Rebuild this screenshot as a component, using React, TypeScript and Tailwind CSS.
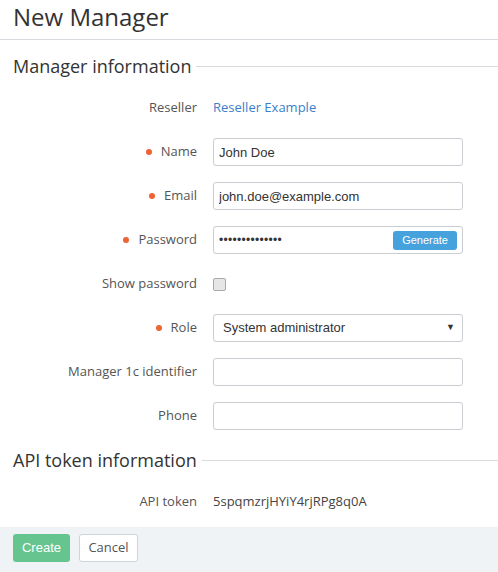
const label = "font-['Open_Sans',sans-serif] text-[13px] text-[#555]";
const input =
  "h-[28px] w-[250px] rounded-[3px] border border-[#c9ccd1] bg-white px-[5px] font-['Liberation_Sans',Arial,sans-serif] text-[13px] text-[#333] outline-none";

function Row({ name, required, children }: { name: string; required?: boolean; children: React.ReactNode }) {
  return (
    <div className="flex h-[28px] items-center">
      <div className={`flex w-[197px] items-center justify-end ${label}`}>
        {required && <span className="mr-[9px] inline-block h-[6px] w-[6px] rounded-full bg-[#ef6234]" />}
        {name}
      </div>
      <div className="ml-[16px] flex items-center">{children}</div>
    </div>
  );
}

function Section({ title }: { title: string }) {
  return (
    <div className="flex h-[32px] items-center pl-[13px]">
      <span className="font-['Open_Sans',sans-serif] text-[18px] text-[#333]">{title}</span>
      <span className="ml-[5px] h-px flex-1 bg-[#d6d9de]" />
    </div>
  );
}

export default function App() {
  return (
    <div className="flex h-[572px] w-[498px] flex-col bg-white">
      <div className="flex h-[40px] items-center border-b border-[#d6d9de] pl-[13px] pb-[6px]">
        <h1 className="font-['Open_Sans',sans-serif] text-[24px] text-[#333]">New Manager</h1>
      </div>
      <div className="mt-[10px]">
        <Section title="Manager information" />
      </div>
      <div className="mt-[12px] flex flex-col gap-[16px]">
        <Row name="Reseller">
          <span className="font-['Open_Sans',sans-serif] text-[13px] text-[#3b7fca]">Reseller Example</span>
        </Row>
        <Row name="Name" required>
          <input className={input} defaultValue="John Doe" />
        </Row>
        <Row name="Email" required>
          <input className={input} defaultValue="john.doe@example.com" />
        </Row>
        <Row name="Password" required>
          <div className={`${input} flex items-center justify-between pr-[5px]`}>
            <span className="text-[12px] tracking-[0.3px]">••••••••••••••</span>
            <button className="h-[19px] rounded-[3px] bg-[#45a2dd] px-[9px] font-['Liberation_Sans',Arial,sans-serif] text-[11px] text-white">
              Generate
            </button>
          </div>
        </Row>
        <Row name="Show password">
          <span className="inline-block h-[13px] w-[13px] rounded-[2px] border border-[#a9a9a9] bg-[#e6e6e6]" />
        </Row>
        <Row name="Role" required>
          <div className={`${input} flex items-center justify-between pl-[9px] pr-[7px]`}>
            <span>System administrator</span>
            <span className="text-[9px] text-[#333]">▼</span>
          </div>
        </Row>
        <Row name="Manager 1c identifier">
          <input className={input} />
        </Row>
        <Row name="Phone">
          <input className={input} />
        </Row>
      </div>
      <div className="mt-[14px]">
        <Section title="API token information" />
      </div>
      <div className="mt-[12px]">
        <Row name="API token">
          <span className="font-['Open_Sans',sans-serif] text-[13px] text-[#444]">5spqmzrjHYiY4rjRPg8q0A</span>
        </Row>
      </div>
      <div className="mt-[11px] flex flex-1 items-center gap-[9px] bg-[#eff3f6] pl-[13px] pb-[3px]">
        <button className="h-[28px] w-[57px] rounded-[3px] bg-[#66c58f] font-['Liberation_Sans',Arial,sans-serif] text-[13px] text-white">
          Create
        </button>
        <button className="h-[28px] w-[59px] rounded-[3px] border border-[#d0d3d8] bg-white font-['Open_Sans',sans-serif] text-[13px] text-[#555]">
          Cancel
        </button>
      </div>
    </div>
  );
}
